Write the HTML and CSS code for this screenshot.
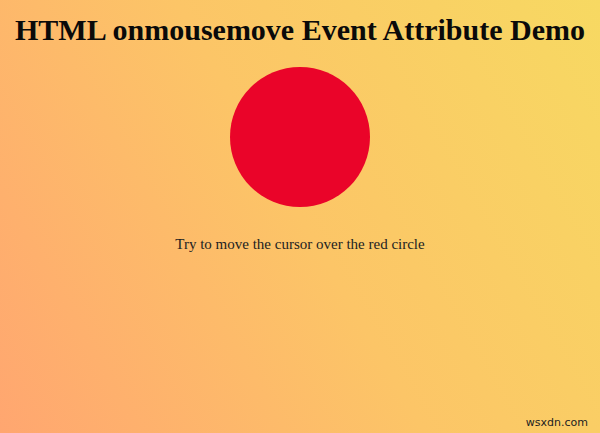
FILE: index.html
```html
<!DOCTYPE html>
<html>
<head>
<meta charset="utf-8">
<link rel="stylesheet" href="styles.css">
</head>
<body>
<div class="page">
  <h1 class="title">HTML onmousemove Event Attribute Demo</h1>
  <div class="circle"></div>
  <p class="hint">Try to move the cursor over the red circle</p>
  <div class="watermark">wsxdn.com</div>
</div>
</body>
</html>
```
FILE: styles.css
```css
html, body {
  margin: 0;
  padding: 0;
  width: 600px;
  height: 433px;
  overflow: hidden;
}
.page {
  position: relative;
  width: 600px;
  height: 433px;
  box-sizing: border-box;
  background: linear-gradient(60deg, #ffa670 0%, #fcc567 50%, #f7d962 100%);
  font-family: "Liberation Serif", "Times New Roman", serif;
  display: flex;
  flex-direction: column;
  align-items: center;
  padding-top: 13px;
}
.title {
  margin: 0;
  font-size: 30px;
  font-weight: bold;
  color: #0a0a0a;
  line-height: 34px;
}
.circle {
  width: 140px;
  height: 140px;
  border-radius: 50%;
  background: #ea0429;
  margin-top: 20px;
}
.hint {
  margin: 28px 0 0;
  font-size: 15px;
  color: #222;
  line-height: 18px;
}
.watermark {
  position: absolute;
  right: 12px;
  bottom: 4px;
  font-family: "DejaVu Sans", Verdana, sans-serif;
  font-size: 11px;
  color: #222;
}
```
